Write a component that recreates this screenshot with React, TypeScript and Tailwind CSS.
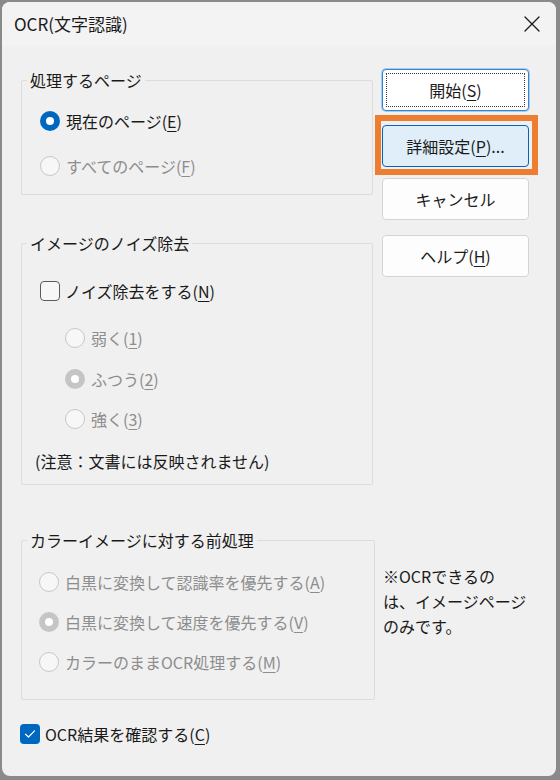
import type { ReactNode } from "react";

const font = { fontFamily: "'Noto Sans CJK JP', 'Noto Sans', sans-serif" };

function Key({ k }: { k: string }) {
  return <span className="underline underline-offset-[3px] decoration-1">{k}</span>;
}

function Radio({ checked, disabled, children }: { checked?: boolean; disabled?: boolean; children: ReactNode }) {
  let circle = "bg-[#f7f7f7] border border-[#c7c7c7]";
  if (checked && !disabled) circle = "bg-[#0067c0]";
  if (checked && disabled) circle = "bg-[#c5c5c5]";
  return (
    <div className="flex items-center h-[30px] gap-[6px]">
      <span className={`w-[20px] h-[20px] rounded-full flex items-center justify-center flex-shrink-0 ${circle}`}>
        {checked && <span className="w-[8px] h-[8px] rounded-full bg-white" />}
      </span>
      <span className={disabled ? "text-[#8d8d8d]" : "text-[#1a1a1a]"}>{children}</span>
    </div>
  );
}

function Checkbox({ checked, children }: { checked?: boolean; children: ReactNode }) {
  return (
    <div className="flex items-center h-[30px] gap-[5px]">
      {checked ? (
        <span className="w-[20px] h-[20px] rounded-[4px] bg-[#0067c0] flex items-center justify-center flex-shrink-0">
          <svg width="12" height="10" viewBox="0 0 12 10" fill="none">
            <path d="M1.5 5.2 L4.5 8 L10.5 1.8" stroke="white" strokeWidth="1.2" strokeLinecap="round" strokeLinejoin="round" />
          </svg>
        </span>
      ) : (
        <span className="w-[20px] h-[20px] rounded-[4px] bg-[#f7f7f7] border border-[#5c5c5c] flex-shrink-0" />
      )}
      <span className="text-[#1a1a1a]">{children}</span>
    </div>
  );
}

function Group({ title, className, children }: { title: string; className: string; children: ReactNode }) {
  return (
    <fieldset className={`border border-[#dcdcdc] rounded-[2px] p-0 ${className}`}>
      <legend className="ml-[5px] px-[3px] leading-[22px] text-[#1a1a1a]">{title}</legend>
      {children}
    </fieldset>
  );
}

function Btn({ variant, className, children }: { variant?: "default" | "active"; className?: string; children: ReactNode }) {
  const look =
    variant === "default"
      ? "bg-white border border-[#2f86d6] shadow-[0_0_0_1px_rgba(47,134,214,0.35)]"
      : variant === "active"
      ? "bg-[#e0eef9] border border-[#0067c0]"
      : "bg-[#fdfdfd] border border-[#d4d4d4]";
  return (
    <div className={`relative w-[147px] h-[42px] rounded-[4px] flex items-center justify-center text-[#1b1b1b] ${look} ${className ?? ""}`}>
      {variant === "default" && (
        <span className="absolute inset-[3px] border border-dotted border-[#3a3a3a] rounded-[1px]" />
      )}
      <span className="relative">{children}</span>
    </div>
  );
}

export default function App() {
  return (
    <div className="w-[560px] h-[780px] bg-[#8a8a8a] pl-[2px] pt-[2px] pr-[4px] pb-[4px] text-[16px] leading-[22px]" style={font}>
      <div className="h-full flex flex-col bg-[#f0f0f0] rounded-[8px] overflow-hidden">
        {/* Title bar */}
        <div className="h-[44px] flex items-center justify-between bg-[#f3f3f3] pl-[12px] flex-shrink-0">
          <span className="text-[#1a1a1a] text-[17px]">OCR(文字認識)</span>
          <div className="w-[46px] h-[44px] flex items-center justify-center mr-[1px]">
            <svg width="16" height="16" viewBox="0 0 16 16" fill="none">
              <path d="M1 1 L15 15 M15 1 L1 15" stroke="#1a1a1a" strokeWidth="1.3" strokeLinecap="round" />
            </svg>
          </div>
        </div>

        {/* Body */}
        <div className="relative flex-1 pl-[19px]">
          <div className="flex">
            <div className="w-[352px] flex flex-col">
              <Group title="処理するページ" className="mt-[23px]">
                <div className="flex flex-col gap-[15px] pt-[15px] pb-[13px] pl-[18px]">
                  <Radio checked>
                    現在のページ(<Key k="E" />)
                  </Radio>
                  <Radio disabled>
                    すべてのページ(<Key k="F" />)
                  </Radio>
                </div>
              </Group>

              <Group title="イメージのノイズ除去" className="mt-[37px]">
                <div className="flex flex-col pt-[22px] pb-[8px]">
                  <div className="pl-[18px]">
                    <Checkbox>
                      ノイズ除去をする(<Key k="N" />)
                    </Checkbox>
                  </div>
                  <div className="pl-[43px] mt-[17px]">
                    <Radio disabled>
                      弱く(<Key k="1" />)
                    </Radio>
                  </div>
                  <div className="pl-[43px] mt-[11px]">
                    <Radio disabled checked>
                      ふつう(<Key k="2" />)
                    </Radio>
                  </div>
                  <div className="pl-[43px] mt-[10px]">
                    <Radio disabled>
                      強く(<Key k="3" />)
                    </Radio>
                  </div>
                  <div className="pl-[13px] mt-[12px] h-[30px] flex items-center text-[#1a1a1a]">
                    (注意：文書には反映されません)
                  </div>
                </div>
              </Group>
            </div>

            <div className="ml-[9px] flex flex-col">
              <Btn variant="default" className="mt-[23px]">
                開始(<Key k="S" />)
              </Btn>
              <Btn variant="active" className="mt-[14px]">
                詳細設定(<Key k="P" />)...
              </Btn>
              <Btn className="mt-[11px]">キャンセル</Btn>
              <Btn className="mt-[15px]">
                ヘルプ(<Key k="H" />)
              </Btn>
            </div>
          </div>

          <div className="flex items-start">
            <Group title="カラーイメージに対する前処理" className="mt-[44px] w-[354px]">
              <div className="flex flex-col gap-[10px] pt-[16px] pb-[22px] pl-[17px]">
                <Radio disabled>
                  白黒に変換して認識率を優先する(<Key k="A" />)
                </Radio>
                <Radio disabled checked>
                  白黒に変換して速度を優先する(<Key k="V" />)
                </Radio>
                <Radio disabled>
                  カラーのままOCR処理する(<Key k="M" />)
                </Radio>
              </div>
            </Group>
            <p className="ml-[8px] mt-[79px] w-[170px] leading-[25px] text-[#1a1a1a] whitespace-nowrap">
              ※OCRできるの
              <br />
              は、イメージページ
              <br />
              のみです。
            </p>
          </div>

          <div className="mt-[19px] -ml-[1px]">
            <Checkbox checked>
              OCR結果を確認する(<Key k="C" />)
            </Checkbox>
          </div>

          {/* Orange highlight annotation */}
          <div className="absolute left-[373px] top-[69px] w-[163px] h-[60px] border-[6px] border-[#ed7d31] pointer-events-none" />
        </div>
      </div>
    </div>
  );
}
